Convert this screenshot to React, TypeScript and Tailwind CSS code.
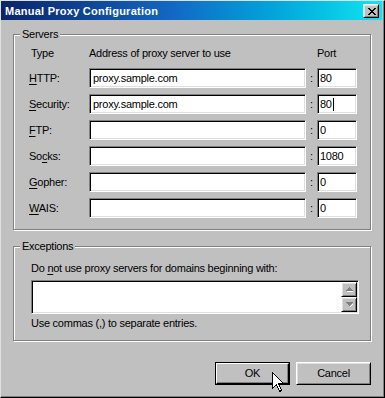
import React from "react";

const raised =
  "border border-t-white border-l-white border-r-black border-b-black shadow-[inset_1px_1px_0_#dfdfdf,inset_-1px_-1px_0_#808080]";
const sunken =
  "border border-t-[#808080] border-l-[#808080] border-r-white border-b-white shadow-[inset_1px_1px_0_#000,inset_-1px_-1px_0_#dfdfdf]";

function Group({ label, className, children }: { label: string; className: string; children: React.ReactNode }) {
  return (
    <div className={"relative w-[358px] border border-[#808080] shadow-[inset_1px_1px_0_#fff,1px_1px_0_#fff] " + className}>
      <span className="absolute left-[6px] top-[-7px] px-[2px] bg-[#c0c0c0] leading-[13px]">{label}</span>
      {children}
    </div>
  );
}

function Row({ pre, acc, post, value, port, caret }: { pre: string; acc: string; post: string; value: string; port: string; caret?: boolean }) {
  return (
    <div className="flex h-[20px] items-center">
      <div className="w-[60px] leading-[13px]">
        {pre}
        <span className="underline underline-offset-[2px]">{acc}</span>
        {post}
      </div>
      <div className={"w-[217px] h-[20px] bg-white flex items-center pl-[3px] leading-[13px] " + sunken}>{value}</div>
      <div className="w-[11px] text-center leading-[13px]">:</div>
      <div className={"w-[40px] h-[20px] bg-white flex items-center pl-[2px] leading-[13px] " + sunken}>
        {port}
        {caret && <span className="inline-block w-[1px] h-[13px] bg-black ml-[1px]" />}
      </div>
    </div>
  );
}

function Arrow({ up }: { up: boolean }) {
  return (
    <svg width="7" height="5" viewBox="0 0 7 5" shapeRendering="crispEdges">
      {up ? (
        <>
          <path d="M1 4h7v1H1z" fill="#fff" />
          <path d="M3 0h1v1H3zM2 1h3v1H2zM1 2h5v1H1zM0 3h7v1H0z" fill="#808080" />
        </>
      ) : (
        <>
          <path d="M4 4h1v1H4zM5 3h1v1H5zM6 2h1v1H6zM7 1h0v1H7z" fill="#fff" />
          <path d="M0 0h7v1H0zM1 1h5v1H1zM2 2h3v1H2zM3 3h1v1H3z" fill="#808080" />
        </>
      )}
    </svg>
  );
}

export default function App() {
  return (
    <div className="relative w-[385px] h-[398px] bg-[#c0c0c0] border-l border-t border-l-[#dfdfdf] border-t-[#dfdfdf] border-r border-b border-r-black border-b-black font-['Liberation_Sans',Arial,sans-serif] text-[11px] text-black tracking-[-0.25px]">
      <div className="h-full flex flex-col border-r border-b border-r-[#808080] border-b-[#808080] pr-[1px]">
        {/* Title bar */}
        <div className="h-[19px] flex bg-linear-to-r from-[#0a246a] via-[#1268c4] via-45% to-[#14e4f0]">
          <div className="pl-[4px] leading-[19px] pt-[1px] font-bold text-white tracking-[0.25px]">Manual Proxy Configuration</div>
          <div className={"ml-auto mr-[3px] mt-[3px] w-[16px] h-[14px] bg-[#c0c0c0] flex items-start justify-center pt-[3px] pl-[1px] " + raised}>
            <svg width="8" height="7" viewBox="0 0 8 7" shapeRendering="crispEdges">
              <path
                d="M0 0h2v1H0zM6 0h2v1H6zM1 1h2v1H1zM5 1h2v1H5zM2 2h4v1H2zM3 3h2v1H3zM2 4h4v1H2zM1 5h2v1H1zM5 5h2v1H5zM0 6h2v1H0zM6 6h2v1H6z"
                fill="#000"
              />
            </svg>
          </div>
        </div>

        {/* Content */}
        <div className="flex-1 flex flex-col pl-[12px] pt-[14px]">
          <Group label="Servers" className="h-[196px] pl-[15px] pt-[12px]">
            <div className="flex h-[13px] leading-[13px]">
              <div className="w-[60px] pl-[2px]">Type</div>
              <div className="w-[228px]">Address of proxy server to use</div>
              <div>Port</div>
            </div>
            <div className="mt-[8px] flex flex-col gap-[6px]">
              <Row pre="" acc="H" post="TTP:" value="proxy.sample.com" port="80" />
              <Row pre="" acc="S" post="ecurity:" value="proxy.sample.com" port="80" caret />
              <Row pre="" acc="F" post="TP:" value="" port="0" />
              <Row pre="So" acc="c" post="ks:" value="" port="1080" />
              <Row pre="" acc="G" post="opher:" value="" port="0" />
              <Row pre="" acc="W" post="AIS:" value="" port="0" />
            </div>
          </Group>

          <Group label="Exceptions" className="mt-[16px] h-[95px] pl-[17px] pt-[15px]">
            <div className="h-[13px] leading-[13px]">
              Do <span className="underline underline-offset-[2px]">n</span>ot use proxy servers for domains beginning with:
            </div>
            <div className={"mt-[5px] w-[328px] h-[34px] bg-white flex justify-end p-[1px] " + sunken}>
              <div className="w-[16px] flex flex-col">
                <div className={"h-[15px] bg-[#c0c0c0] flex items-center justify-center " + raised}>
                  <Arrow up />
                </div>
                <div className={"h-[15px] bg-[#c0c0c0] flex items-center justify-center " + raised}>
                  <Arrow up={false} />
                </div>
              </div>
            </div>
            <div className="mt-[3px] h-[13px] leading-[13px]">Use commas (,) to separate entries.</div>
          </Group>

          <div className="mt-[21px] w-[358px] flex justify-end gap-[6px]">
            <div className="w-[75px] h-[23px] border border-black">
              <div className="w-full h-full flex items-center justify-center border border-t-white border-l-white border-r-black border-b-black shadow-[inset_-1px_-1px_0_#808080]">
                OK
              </div>
            </div>
            <div className={"w-[75px] h-[23px] flex items-center justify-center " + raised}>Cancel</div>
          </div>
        </div>
      </div>

      {/* Mouse cursor */}
      <svg className="absolute left-[271px] top-[371px]" width="13" height="21" viewBox="0 0 13 21" shapeRendering="crispEdges">
        <path d="M0.5 0.5 L0.5 16.5 L4.5 12.5 L7.5 19.5 L9.5 18.5 L6.5 11.5 L11.5 11.5 Z" fill="#fff" stroke="#000" strokeWidth="1" />
      </svg>
    </div>
  );
}
